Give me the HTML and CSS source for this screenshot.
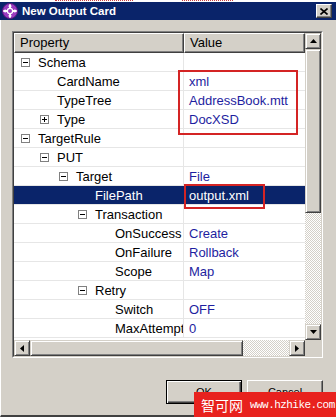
FILE: index.html
```html
<!DOCTYPE html>
<html lang="en">
<head>
    <meta charset="UTF-8">
    <title>New Output Card</title>
    <link rel="stylesheet" href="styles.css">
</head>
<body>

<div class="window">
    <div class="topstrip"><span class="dots d1"></span><span class="dots d2"></span></div>

    <div class="titlebar">
        <svg class="app-icon" width="16" height="16" viewBox="0 0 16 16">
            <circle cx="8" cy="8" r="7.5" fill="#9a3cc0" stroke="#5e1a80" stroke-width="1"/>
            <path d="M8 1.5v13M1.5 8h13" stroke="#fff" stroke-width="2"/>
            <path d="M8 1l-2 2.5h4zM8 15l-2-2.5h4zM1 8l2.5-2v4zM15 8l-2.5-2v4z" fill="#fff"/>
            <circle cx="8" cy="8" r="2.6" fill="#9a3cc0" stroke="#fff" stroke-width="1.2"/>
        </svg>
        <span class="title">New Output Card</span>
        <span class="close-btn">
            <svg width="8" height="7" viewBox="0 0 8 7"><path d="M0.5 0.5l7 6M7.5 0.5l-7 6" stroke="#000" stroke-width="1.6"/></svg>
        </span>
    </div>

    <div class="content">
        <div class="panel">
            <div class="panel-inner">
                <div class="sheet">
                    <div class="head">
                        <div class="hcell prop">Property</div>
                        <div class="hcell val">Value</div>
                    </div>

                    <div class="row"><div class="pcell lv0"><span class="tg minus"></span>Schema</div><div class="vcell"></div></div>
                    <div class="row"><div class="pcell lv1"><span class="leaf"></span>CardName</div><div class="vcell">xml</div></div>
                    <div class="row"><div class="pcell lv1"><span class="leaf"></span>TypeTree</div><div class="vcell">AddressBook.mtt</div></div>
                    <div class="row"><div class="pcell lv1"><span class="tg plus"></span>Type</div><div class="vcell">DocXSD</div></div>
                    <div class="row"><div class="pcell lv0"><span class="tg minus"></span>TargetRule</div><div class="vcell"></div></div>
                    <div class="row"><div class="pcell lv1"><span class="tg minus"></span>PUT</div><div class="vcell"></div></div>
                    <div class="row"><div class="pcell lv2"><span class="tg minus"></span>Target</div><div class="vcell">File</div></div>
                    <div class="row sel"><div class="pcell lv3"><span class="leaf"></span>FilePath</div><div class="vcell">output.xml</div></div>
                    <div class="row"><div class="pcell lv3"><span class="tg minus"></span>Transaction</div><div class="vcell"></div></div>
                    <div class="row"><div class="pcell lv4"><span class="leaf"></span>OnSuccess</div><div class="vcell">Create</div></div>
                    <div class="row"><div class="pcell lv4"><span class="leaf"></span>OnFailure</div><div class="vcell">Rollback</div></div>
                    <div class="row"><div class="pcell lv4"><span class="leaf"></span>Scope</div><div class="vcell">Map</div></div>
                    <div class="row"><div class="pcell lv3"><span class="tg minus"></span>Retry</div><div class="vcell"></div></div>
                    <div class="row"><div class="pcell lv4"><span class="leaf"></span>Switch</div><div class="vcell">OFF</div></div>
                    <div class="row"><div class="pcell lv4"><span class="leaf"></span>MaxAttempt</div><div class="vcell">0</div></div>
                </div>

                <div class="vscroll">
                    <span class="sbtn"><svg width="7" height="4"><path d="M3.5 0L7 4H0z"/></svg></span>
                    <span class="thumb v"></span>
                    <span class="track"></span>
                    <span class="sbtn"><svg width="7" height="4"><path d="M0 0h7L3.5 4z"/></svg></span>
                </div>

                <div class="hscroll">
                    <span class="sbtn"><svg width="4" height="7"><path d="M0 3.5L4 0v7z"/></svg></span>
                    <span class="thumb h"></span>
                    <span class="track"></span>
                    <span class="sbtn"><svg width="4" height="7"><path d="M0 0l4 3.5L0 7z"/></svg></span>
                </div>

                <div class="corner"></div>
            </div>
        </div>

        <div class="actions">
            <button class="btn default">OK</button>
            <button class="btn">Cancel</button>
        </div>
    </div>

    <!-- red marks drawn over the screenshot -->
    <div class="mark mark-schema"></div>
    <div class="mark mark-path"></div>

    <div class="watermark">
        <span class="wm-cn">智可网</span>
        <span class="wm-url">www.hzhike.com</span>
    </div>
</div>

</body>
</html>
```

FILE: styles.css
```css
* {
    box-sizing: border-box;
}

html, body {
    margin: 0;
    padding: 0;
}

body {
    font-family: "Liberation Sans", Arial, sans-serif;
    background: #fff;
}

.window {
    position: relative;
    width: 336px;
    height: 417px;
    display: flex;
    flex-direction: column;
    background: #d4d0c8;
    overflow: hidden;
}

/* bit of the page above the dialog */
.topstrip {
    height: 2px;
    background: #fff;
    display: flex;
}
.dots {
    height: 1px;
    border-top: 1px dotted #c84040;
}
.d1 { margin-left: 55px; width: 78px; }
.d2 { margin-left: 49px; width: 51px; }

.titlebar {
    height: 18px;
    background: #0a246a;
    color: #fff;
    display: flex;
    align-items: center;
    padding-left: 2px;
}
.app-icon {
    flex: none;
}
.title {
    flex: 1;
    margin-left: 4px;
    font-size: 11.5px;
    font-weight: bold;
}
.close-btn {
    width: 16px;
    height: 14px;
    margin-right: 4px;
    background: #d4d0c8;
    border: 1px solid;
    border-color: #fff #404040 #404040 #fff;
    box-shadow: inset -1px -1px #808080;
    display: flex;
    align-items: center;
    justify-content: center;
}

.content {
    flex: 1;
    padding: 11px 13px 0 11px;
    border-left: 1px solid #fff;
    border-bottom: 2px solid #404040;
}

.panel {
    width: 311px;
    height: 327px;
    border: 1px solid;
    border-color: #808080 #fff #fff #808080;
}
.panel-inner {
    height: 100%;
    border: 1px solid;
    border-color: #404040 #d4d0c8 #d4d0c8 #404040;
    display: grid;
    grid-template-columns: 291px 16px;
    grid-template-rows: 307px 16px;
    background: #fff;
}

.sheet {
    overflow: hidden;
    font-size: 13px;
}

.head {
    display: flex;
    height: 20px;
}
.hcell {
    background: #d4d0c8;
    border: 1px solid;
    border-color: #fff #404040 #404040 #fff;
    box-shadow: inset -1px -1px #808080;
    padding-left: 5px;
    line-height: 17px;
    color: #000;
}
.hcell.prop { width: 170px; }
.hcell.val { flex: 1; }

.row {
    display: flex;
    height: 19px;
    border-bottom: 1px solid #e6e6e6;
}
.pcell {
    width: 170px;
    flex: none;
    display: flex;
    align-items: center;
    white-space: nowrap;
    overflow: hidden;
    border-right: 1px solid #e6e6e6;
    color: #000;
}
.vcell {
    flex: 1;
    display: flex;
    align-items: center;
    padding-left: 5px;
    color: #1e1ea0;
    white-space: nowrap;
}
.row.sel {
    background: #0a246a;
}
.row.sel .pcell {
    color: #fff;
    border-right-color: #0a246a;
}
.row.sel .vcell {
    color: #fff;
}

.lv0 { padding-left: 7px; }
.lv1 { padding-left: 26px; }
.lv2 { padding-left: 45px; }
.lv3 { padding-left: 64px; }
.lv4 { padding-left: 84px; }

.leaf {
    width: 17px;
    flex: none;
}
.tg {
    position: relative;
    width: 9px;
    height: 9px;
    flex: none;
    margin-right: 8px;
    border: 1px solid #808080;
    background: #fff;
}
.tg::before {
    content: "";
    position: absolute;
    left: 1px;
    top: 3px;
    width: 5px;
    height: 1px;
    background: #000;
}
.tg.plus::after {
    content: "";
    position: absolute;
    left: 3px;
    top: 1px;
    width: 1px;
    height: 5px;
    background: #000;
}

/* scrollbars */
.vscroll, .hscroll {
    display: flex;
    background-color: #d4d0c8;
    background-image: conic-gradient(#fff 25%, #d4d0c8 0 50%, #fff 0 75%, #d4d0c8 0);
    background-size: 2px 2px;
}
.vscroll { flex-direction: column; }

.sbtn, .thumb {
    flex: none;
    background: #d4d0c8;
    border: 1px solid;
    border-color: #d4d0c8 #404040 #404040 #d4d0c8;
    box-shadow: inset 1px 1px #fff, inset -1px -1px #808080;
}
.sbtn {
    width: 16px;
    height: 16px;
    display: flex;
    align-items: center;
    justify-content: center;
}
.thumb.v { height: 164px; }
.thumb.h { width: 213px; }
.track { flex: 1; }

.corner {
    background: #d4d0c8;
}

.actions {
    display: flex;
    justify-content: flex-end;
    gap: 5px;
    margin-top: 22px;
}
.btn {
    width: 76px;
    height: 24px;
    padding: 0;
    font-family: "Liberation Sans", Arial, sans-serif;
    font-size: 11px;
    color: #000;
    background: #d4d0c8;
    border: 1px solid;
    border-color: #fff #404040 #404040 #fff;
    box-shadow: inset -1px -1px #808080;
}
.btn.default {
    border-color: #000;
    box-shadow: inset 1px 1px #fff, inset -1px -1px #404040, inset -2px -2px #808080;
}

/* annotation boxes */
.mark {
    position: absolute;
    border: 2px solid #d42424;
}
.mark-schema {
    left: 178px;
    top: 70px;
    width: 120px;
    height: 65px;
}
.mark-path {
    left: 184px;
    top: 184px;
    width: 81px;
    height: 25px;
}

.watermark {
    position: absolute;
    left: 194px;
    top: 392px;
    width: 142px;
    height: 25px;
    background: #e8221e;
    color: #fff;
    display: flex;
    align-items: center;
    padding-left: 7px;
}
.wm-cn {
    font-family: "Noto Sans CJK SC", sans-serif;
    font-size: 14px;
    line-height: 1;
}
.wm-url {
    margin-left: 7px;
    font-family: "Liberation Mono", monospace;
    font-size: 11px;
    letter-spacing: -0.55px;
}
```
